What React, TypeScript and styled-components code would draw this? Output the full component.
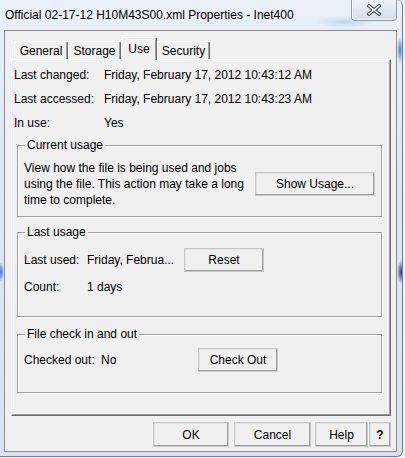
import React from "react";
import styled, { createGlobalStyle } from "styled-components";

const Global = createGlobalStyle`
  html, body { margin: 0; padding: 0; }
  body {
    width: 405px;
    height: 458px;
    overflow: hidden;
    background: #eef4fa;
    font-family: "Liberation Sans", Arial, sans-serif;
    font-size: 12px;
    color: #000;
  }
`;

const Window = styled.div`
  width: 403px;
  height: 457px;
  box-sizing: border-box;
  display: flex;
  flex-direction: column;
  border-right: 1px solid #6f7f93;
  border-bottom: 1px solid #6f7f93;
  border-radius: 0 6px 6px 0;
  background:
    radial-gradient(ellipse 3px 14px at 400px 50px, rgba(40, 120, 225, 0.95), rgba(40, 120, 225, 0) 100%),
    radial-gradient(ellipse 4px 12px at 401px 272px, rgba(30, 40, 170, 0.95), rgba(30, 40, 170, 0) 100%),
    radial-gradient(ellipse 3px 10px at 1px 272px, rgba(40, 80, 210, 0.85), rgba(40, 80, 210, 0) 100%),
    radial-gradient(ellipse 30px 6px at 345px 22px, rgba(120, 170, 230, 0.35), rgba(120, 170, 230, 0) 100%),
    linear-gradient(180deg, #e9f0f8 0%, #dde8f4 40%, #d6e3f1 100%);
`;

const TitleBar = styled.div`
  height: 30px;
  display: flex;
  align-items: flex-start;
  padding-left: 5px;
  box-sizing: border-box;
`;

const TitleText = styled.div`
  flex: 1;
  line-height: 14px;
  margin-top: 8px;
  font-size: 12px;
  color: #000;
  white-space: nowrap;
`;

const CloseButton = styled.div`
  width: 46px;
  height: 21px;
  margin-right: 5px;
  box-sizing: border-box;
  border: 1px solid #8e9aa8;
  border-top: none;
  border-radius: 0 0 4px 4px;
  background: linear-gradient(180deg, #eef3f9 0%, #dfe8f2 50%, #d3dfec 100%);
  box-shadow: inset 0 -1px 0 rgba(255, 255, 255, 0.8), inset 1px 0 0 rgba(255, 255, 255, 0.7);
  display: flex;
  align-items: center;
  justify-content: center;
`;

const Client = styled.div`
  flex: 1;
  margin: 0 5px 4px 4px;
  border: 1px solid #8c8c8c;
  background: #f0f0f0;
  display: flex;
  flex-direction: column;
  padding: 6px 5px 4px 6px;
  box-sizing: border-box;
`;

const TabRow = styled.div`
  height: 22px;
  display: flex;
  align-items: flex-end;
  padding-left: 3px;
`;

const Tab = styled.div<{ $active?: boolean; $w: number }>`
  position: relative;
  z-index: ${(p) => (p.$active ? 2 : 1)};
  width: ${(p) => p.$w}px;
  height: ${(p) => (p.$active ? "23px" : "18px")};
  margin-bottom: ${(p) => (p.$active ? "-1px" : "0")};
  padding-bottom: ${(p) => (p.$active ? "1px" : "0")};
  box-sizing: border-box;
  display: flex;
  align-items: center;
  justify-content: center;
  background: #f0f0f0;
  border-top: 1px solid #ffffff;
  border-left: 1px solid #ffffff;
  border-right: 1px solid #696969;
  box-shadow: inset -1px 0 0 #a0a0a0;
  border-radius: 2px 2px 0 0;
  white-space: nowrap;
`;

const Panel = styled.div`
  flex: 1;
  border-top: 1px solid #ffffff;
  border-left: 1px solid #ffffff;
  border-right: 1px solid #696969;
  border-bottom: 1px solid #696969;
  box-shadow: inset -1px -1px 0 #a0a0a0;
  padding: 3px 2px 0 2px;
  display: flex;
  flex-direction: column;
`;

const InfoGrid = styled.div`
  display: grid;
  grid-template-columns: 90px 1fr;
  grid-auto-rows: 24px;
  align-items: center;
  white-space: nowrap;
`;

const Group = styled.div<{ $top: number; $pt: number; $pb: number }>`
  position: relative;
  margin: ${(p) => p.$top}px 6px 0 3px;
  padding: ${(p) => p.$pt}px 6px ${(p) => p.$pb}px 6px;
  border: 1px solid #a0a0a0;
  box-shadow: inset 1px 1px 0 #ffffff, 1px 1px 0 #ffffff;
`;

const GroupTitle = styled.span`
  position: absolute;
  left: 7px;
  top: -8px;
  line-height: 14px;
  padding: 0 2px;
  background: #f0f0f0;
  white-space: nowrap;
`;

const UsageRow = styled.div`
  display: flex;
  align-items: center;
`;

const Description = styled.div`
  width: 228px;
  line-height: 16px;
`;

const FieldGrid = styled.div<{ $cols: string }>`
  display: grid;
  grid-template-columns: ${(p) => p.$cols};
  grid-auto-rows: 24px;
  row-gap: 3px;
  align-items: center;
  white-space: nowrap;
`;

const Button = styled.div<{ $w: number; $h?: number; $bold?: boolean }>`
  width: ${(p) => p.$w}px;
  height: ${(p) => p.$h ?? 24}px;
  box-sizing: border-box;
  display: flex;
  align-items: center;
  justify-content: center;
  background: #f0f0f0;
  border-top: 1px solid #ffffff;
  border-left: 1px solid #ffffff;
  border-right: 1px solid #696969;
  border-bottom: 1px solid #696969;
  box-shadow: inset -1px -1px 0 #a0a0a0, inset 1px 1px 0 #e3e3e3;
  outline: 1px solid #c8c8c8;
  outline-offset: -1px;
  font-weight: ${(p) => (p.$bold ? "bold" : "normal")};
  white-space: nowrap;
`;

const ButtonRow = styled.div`
  height: 25px;
  margin-top: 6px;
  display: flex;
  justify-content: flex-end;
  gap: 4px;
`;

const HelpPair = styled.div`
  display: flex;
  gap: 1px;
`;

const OkWrap = styled.div`
  margin-right: 1px;
`;

const CloseGlyph = () => (
  <svg width="18" height="12" viewBox="0 0 18 12">
    <path d="M4 2 L14 10 M14 2 L4 10" stroke="#4a4f57" strokeWidth="3.6" strokeLinecap="square" fill="none" />
    <path d="M4 2 L14 10 M14 2 L4 10" stroke="#ffffff" strokeWidth="1.6" strokeLinecap="square" fill="none" />
  </svg>
);

export default function App() {
  return (
    <>
      <Global />
      <Window>
        <TitleBar>
          <TitleText>Official 02-17-12 H10M43S00.xml Properties - Inet400</TitleText>
          <CloseButton>
            <CloseGlyph />
          </CloseButton>
        </TitleBar>
        <Client>
          <TabRow>
            <Tab $w={54}>General</Tab>
            <Tab $w={53}>Storage</Tab>
            <Tab $w={36} $active>Use</Tab>
            <Tab $w={53}>Security</Tab>
          </TabRow>
          <Panel>
            <InfoGrid>
              <span>Last changed:</span>
              <span>Friday, February 17, 2012 10:43:12 AM</span>
              <span>Last accessed:</span>
              <span>Friday, February 17, 2012 10:43:23 AM</span>
              <span>In use:</span>
              <span>Yes</span>
            </InfoGrid>

            <Group $top={10} $pt={14} $pb={8}>
              <GroupTitle>Current usage</GroupTitle>
              <UsageRow>
                <Description>
                  View how the file is being used and jobs using the file. This action may take a long time to
                  complete.
                </Description>
                <Button $w={120} style={{ marginLeft: 3 }}>Show Usage...</Button>
              </UsageRow>
            </Group>

            <Group $top={15} $pt={15} $pb={17}>
              <GroupTitle>Last usage</GroupTitle>
              <FieldGrid $cols="63px 97px 80px">
                <span>Last used:</span>
                <span>Friday, Februa...</span>
                <Button $w={80}>Reset</Button>
                <span>Count:</span>
                <span>1 days</span>
              </FieldGrid>
            </Group>

            <Group $top={17} $pt={13} $pb={20}>
              <GroupTitle>File check in and out</GroupTitle>
              <FieldGrid $cols="77px 97px 80px">
                <span>Checked out:</span>
                <span>No</span>
                <Button $w={80}>Check Out</Button>
              </FieldGrid>
            </Group>
          </Panel>
          <ButtonRow>
            <OkWrap>
              <Button $w={76} $h={25}>OK</Button>
            </OkWrap>
            <Button $w={77} $h={25}>Cancel</Button>
            <HelpPair>
              <Button $w={53} $h={25}>Help</Button>
              <Button $w={22} $h={25} $bold>?</Button>
            </HelpPair>
          </ButtonRow>
        </Client>
      </Window>
    </>
  );
}
